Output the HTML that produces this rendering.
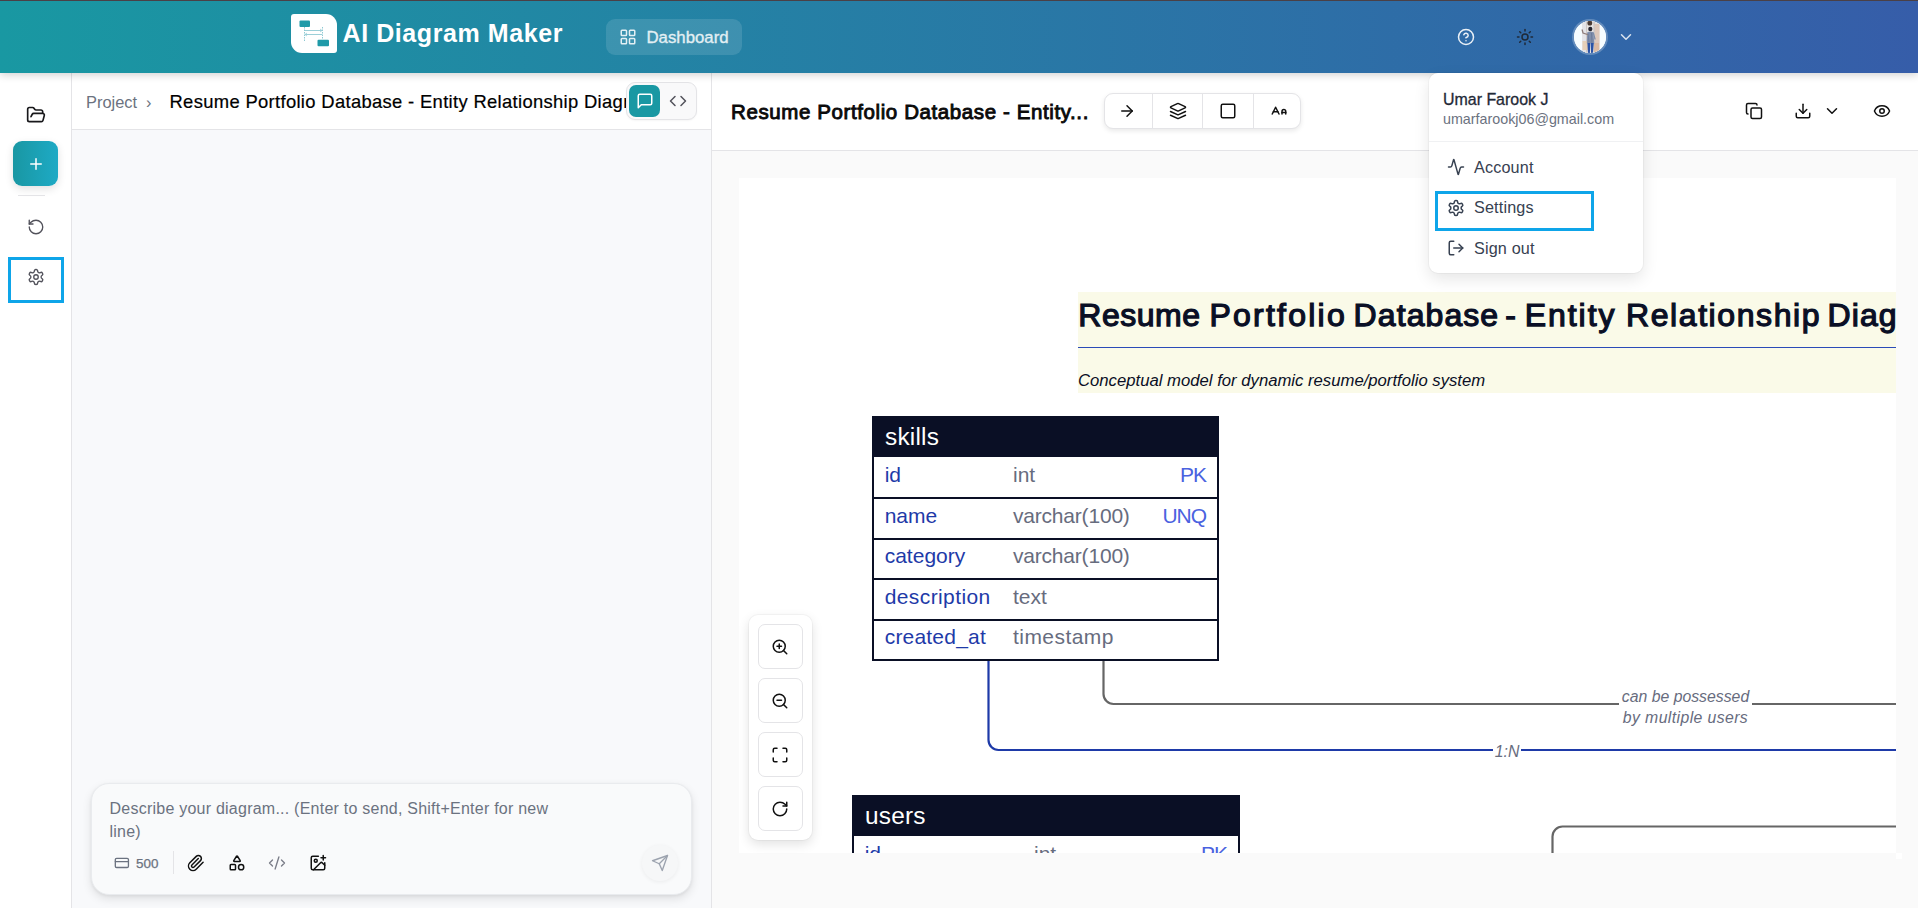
<!DOCTYPE html>
<html lang="en">
<head>
<meta charset="utf-8">
<title>AI Diagram Maker</title>
<style>
*{box-sizing:border-box;margin:0;padding:0}
html,body{width:1918px;height:908px;overflow:hidden;background:#fafafa;font-family:"Liberation Sans",sans-serif;color:#111}
.abs,.t{position:absolute}
.t{white-space:nowrap}
svg.ic{position:absolute;fill:none;stroke:currentColor;stroke-width:2;stroke-linecap:round;stroke-linejoin:round;overflow:visible}
#topline{left:0;top:0;width:1918px;height:1px;background:#4a4046;z-index:30}
#header{left:0;top:0;width:1918px;height:73px;background:linear-gradient(90deg,#1998a2,#365da9);box-shadow:0 2px 8px rgba(0,0,0,.18);z-index:20}
#logo{left:291px;top:14px;width:46px;height:39px;background:#fff;border-radius:3px 11px 3px 11px}
#brand{left:342.5px;top:17.800px;font-size:25px;font-weight:700;color:#fff;line-height:30px;letter-spacing:.58px}
#dash{left:606px;top:19px;width:136px;height:36px;border-radius:9px;background:rgba(255,255,255,.12);color:rgba(255,255,255,.86)}
#dashtx{left:646.5px;top:27.600px;font-size:16.800px;line-height:20px;color:#fff;-webkit-text-stroke:.35px #fff;opacity:.86}
#avatar{left:1572px;top:19px;width:36px;height:36px;border-radius:50%;background:#fff;border:2px solid rgba(255,255,255,.24);background-clip:padding-box;overflow:hidden}
#sidebar{left:0;top:73px;width:72px;height:835px;background:#fff;border-right:1px solid #e4e4e7;z-index:5}
#plus{left:13px;top:141px;width:45px;height:45px;border-radius:9px;background:linear-gradient(90deg,#1997a3,#1eaac5);box-shadow:0 3px 8px rgba(0,0,0,.12);z-index:6}
#sdiv{left:18px;top:195px;width:27px;height:1px;background:#e4e4e7;z-index:6}
#hl1{left:8px;top:257px;width:56px;height:46px;border:3px solid #0ea5e9;z-index:7}
#chat{left:72px;top:73px;width:640px;height:835px;background:#f8f9fb;border-right:1px solid #e4e4e7}
#chathead{left:72px;top:73px;width:639px;height:57px;background:#fff;border-bottom:1px solid #e4e4e7;overflow:hidden}
#crumb{left:14px;top:18.600px;font-size:16.4px;line-height:20px;color:#6b7280}
#ctitle{left:97.500px;top:17.600px;font-size:18.4px;line-height:22px;color:#000;letter-spacing:.33px;-webkit-text-stroke:.2px #000}
#toggle{left:626px;top:82px;width:71px;height:38px;background:#f9f9fa;border:1px solid #e4e4e7;border-radius:9px;box-shadow:0 1px 2px rgba(0,0,0,.04)}
#tact{left:629px;top:85px;width:31px;height:32px;background:#1998a3;border-radius:7px}
#inbox{left:91px;top:783px;width:601px;height:112px;background:#f9fafb;border:1px solid #e9ebee;border-radius:18px;box-shadow:0 4px 10px rgba(0,0,0,.10),0 1px 3px rgba(0,0,0,.06)}
#ph{left:109.500px;top:798px;width:470px;font-size:16px;letter-spacing:.235px;line-height:22.5px;color:#6b7280;white-space:normal}
#c500{left:136px;top:855.700px;font-size:13.4px;line-height:16px;color:#6b7280;-webkit-text-stroke:.25px #6b7280}
#idiv{left:173px;top:851px;width:1px;height:23px;background:#e4e4e7}
#sendb{left:642px;top:845px;width:36px;height:36px;border-radius:50%;background:#f6f7f8;box-shadow:0 1px 4px rgba(0,0,0,.06)}
#tbar{left:712px;top:73px;width:1206px;height:78px;background:#fff;border-bottom:1px solid #e4e4e7}
#ptitle{left:731px;top:100px;font-size:20.5px;font-weight:400;line-height:24px;color:#0a0a0a;-webkit-text-stroke:.9px #0a0a0a;letter-spacing:.6px}
#grp{left:1104px;top:93px;width:197px;height:36px;background:#fff;border:1px solid #e4e4e7;border-radius:9px;box-shadow:0 2px 5px rgba(0,0,0,.09)}
#grp i{position:absolute;top:0;width:1px;height:34px;background:#e4e4e7}
#canvas{left:739px;top:178px;width:1157px;height:675px;background:#fff;overflow:hidden}
#corner{left:1896px;top:853px;width:6px;height:6px;background:#fff}
#zoomp{left:749px;top:615px;width:63px;height:225px;background:#fff;border-radius:9px;box-shadow:0 4px 12px rgba(0,0,0,.12),0 0 0 1px rgba(0,0,0,.03)}
.zb{position:absolute;left:758px;width:45px;height:45px;border:1px solid #e4e4e7;border-radius:7px;background:#fff}
#menu{left:1429px;top:73px;width:214px;height:200px;background:#fff;border-radius:9px;box-shadow:0 6px 16px rgba(0,0,0,.10),0 0 0 1px rgba(0,0,0,.03);z-index:25}
#mname{left:1443px;top:89.700px;font-size:15.950px;-webkit-text-stroke:.3px #1f2937;line-height:20px;color:#1f2937;z-index:26}
#mmail{left:1443px;top:110px;font-size:14.3px;line-height:18px;color:#6b7280;z-index:26}
#mdiv{left:1429px;top:141px;width:214px;height:1px;background:#f0f1f3;z-index:26}
.mi{font-size:16.200px;letter-spacing:.15px;line-height:20px;color:#374151;z-index:26}
#hl2{left:1435px;top:191px;width:159px;height:40px;border:3px solid #0ea5e9;z-index:27}
/* diagram */
#ybox{left:339px;top:114px;width:900px;height:101px;background:#fafae8}
#dtitle{position:absolute;left:0;top:117px;width:1157px;height:40px;font-size:32px;font-weight:400;line-height:40px;color:#0a0f25;-webkit-text-stroke:1.250px #0a0f25;white-space:nowrap}
#dtitle span{position:absolute;top:0}
#dline{left:339px;top:169px;width:900px;height:1px;background:#2a4bb8}
#dsub{left:339px;top:193px;font-size:16.700px;font-style:italic;line-height:20px;color:#0a0f25}
.tbl{position:absolute;background:#fff;border:2px solid #0a0f25}
.th{position:absolute;left:-2px;top:-2px;height:41px;background:#0a0f25}
.thx{position:absolute;left:11px;top:2.600px;font-size:24.400px;letter-spacing:.2px;line-height:32px;color:#fff;white-space:nowrap}
.row{position:absolute;left:0;width:100%;height:2px;background:#0a0f25}
.c1,.c2,.c3{position:absolute;font-size:21px;line-height:26px;white-space:nowrap}
.c1{color:#1e3aa8}
.c2{color:#676c7e}
.c3{color:#4a62e0;text-align:right;letter-spacing:-1.100px;margin-right:1.100px}
.lbl{position:absolute;font-size:15.800px;font-style:italic;line-height:21px;color:#676c7e;background:#fff;text-align:center;white-space:nowrap}
</style>
</head>
<body>
<div id="topline" class="abs"></div>
<div id="header" class="abs">
  <div id="logo" class="abs">
    <svg width="46" height="39" viewBox="0 0 46 39" style="position:absolute;left:0;top:0">
      <rect x="8.500" y="6.500" width="10.500" height="6.500" rx="1" fill="#1f9aa8"/>
      <rect x="26.500" y="25.700" width="11.500" height="6.500" rx="1" fill="#1f9aa8"/>
      <path d="M13.500 13v14M31.500 13v12.500" stroke="#8fc9d2" stroke-width="1" stroke-dasharray="1.500 1" fill="none"/>
      <path d="M14 16.500h17M14 20.500h17" stroke="#9ccfd8" stroke-width="1" fill="none"/>
      <path d="M29 15l2 1.500-2 1.500M16 19l-2 1.500 2 1.500" stroke="#9ccfd8" stroke-width=".8" fill="none"/>
    </svg>
  </div>
  <div id="brand" class="t">AI Diagram Maker</div>
  <div id="dash" class="abs"></div>
  <svg class="ic" viewBox="0 0 24 24" width="18.0" height="18.0" style="left:619px;top:28px;color:rgba(255,255,255,.86);stroke-width:2.0"><rect width="7" height="7" x="3" y="3" rx="1"/><rect width="7" height="7" x="14" y="3" rx="1"/><rect width="7" height="7" x="14" y="14" rx="1"/><rect width="7" height="7" x="3" y="14" rx="1"/></svg>
  <div id="dashtx" class="t">Dashboard</div>
  <svg class="ic" viewBox="0 0 24 24" width="18.0" height="18.0" style="left:1457px;top:28px;color:rgba(255,255,255,.9);stroke-width:2.0"><circle cx="12" cy="12" r="10"/><path d="M9.09 9a3 3 0 0 1 5.83 1c0 2-3 3-3 3"/><path d="M12 17h.01"/></svg>
  <svg class="ic" viewBox="0 0 24 24" width="18.0" height="18.0" style="left:1516px;top:28px;color:#1f2937;stroke-width:2.0"><circle cx="12" cy="12" r="4"/><path d="M12 2v2"/><path d="M12 20v2"/><path d="m4.93 4.93 1.41 1.41"/><path d="m17.66 17.66 1.41 1.41"/><path d="M2 12h2"/><path d="M20 12h2"/><path d="m6.34 17.66-1.41 1.41"/><path d="m19.07 4.93-1.41 1.41"/></svg>
  <div id="avatar" class="abs">
    <svg width="32" height="32" viewBox="0 0 32 32" style="position:absolute;left:0;top:0">
      <rect width="32" height="32" fill="#f6fcff"/>
      <rect x="8" y="0" width="17.500" height="32" fill="#e6e3e2"/>
      <rect x="8" y="0" width="4" height="32" fill="#e4e4e8"/>
      <rect x="12" y="0" width="1" height="32" fill="#cfc9c7"/>
      <rect x="20.500" y="3" width="5" height="26" fill="#dcc3b4" opacity=".85"/>
      <rect x="19.500" y="0" width="1.200" height="32" fill="#c9c2c0"/>
      <rect x="8.500" y="20" width="5.500" height="9" fill="#e6cdb3" opacity=".9"/>
      <rect x="20" y="22" width="5" height="9" fill="#d9b59c" opacity=".8"/>
      <ellipse cx="15.800" cy="2" rx="2.400" ry="2.600" fill="#4a3a33"/>
      <ellipse cx="16.300" cy="8" rx="2.100" ry="2.300" fill="#26252f"/>
      <path d="M13.300 11.200c2-.8 4.200-.8 6 0l1 11h-7.500z" fill="#7f8eab"/>
      <path d="M14 12.500l1 9M17.500 12l.5 10" stroke="#5f6f90" stroke-width=".6" fill="none"/>
      <path d="M13.500 13.500l-4.500-1.500-.8-3" stroke="#8f7d7a" stroke-width="1.300" fill="none" stroke-linecap="round"/>
      <path d="M19.300 12l1.700 6" stroke="#7f8eab" stroke-width="1.300" fill="none" stroke-linecap="round"/>
      <path d="M13.400 22h2.900l-.4 10h-2zM16.800 22h3l-.9 10h-1.900z" fill="#2a53a6"/>
    </svg>
  </div>
  <svg class="ic" viewBox="0 0 24 24" width="18.0" height="18.0" style="left:1617px;top:28px;color:rgba(255,255,255,.82);stroke-width:2.0"><path d="m6 9 6 6 6-6"/></svg>
</div>

<div id="sidebar" class="abs"></div>
<svg class="ic" viewBox="0 0 24 24" width="20.0" height="20.0" style="left:26px;top:104.5px;color:#18181b;stroke-width:2.0;z-index:6"><path d="m6 14 1.5-2.9A2 2 0 0 1 9.24 10H20a2 2 0 0 1 1.94 2.5l-1.54 6a2 2 0 0 1-1.95 1.5H4a2 2 0 0 1-2-2V5a2 2 0 0 1 2-2h3.9a2 2 0 0 1 1.69.9l.81 1.2a2 2 0 0 0 1.67.9H18a2 2 0 0 1 2 2v2"/></svg>
<div id="plus" class="abs"></div>
<svg class="ic" viewBox="0 0 24 24" width="18.0" height="18.0" style="left:26.5px;top:154.5px;color:#ffffff;stroke-width:2.0;z-index:7"><path d="M5 12h14"/><path d="M12 5v14"/></svg>
<div id="sdiv" class="abs"></div>
<svg class="ic" viewBox="0 0 24 24" width="18.0" height="18.0" style="left:27px;top:218px;color:#52525b;stroke-width:1.8;z-index:6"><path d="M3 12a9 9 0 1 0 9-9 9.75 9.75 0 0 0-6.74 2.74L3 8"/><path d="M3 3v5h5"/></svg>
<svg class="ic" viewBox="0 0 24 24" width="18.0" height="18.0" style="left:27px;top:268px;color:#52525b;stroke-width:1.8;z-index:6"><path d="M12.22 2h-.44a2 2 0 0 0-2 2v.18a2 2 0 0 1-1 1.73l-.43.25a2 2 0 0 1-2 0l-.15-.08a2 2 0 0 0-2.73.73l-.22.38a2 2 0 0 0 .73 2.73l.15.1a2 2 0 0 1 1 1.72v.51a2 2 0 0 1-1 1.74l-.15.09a2 2 0 0 0-.73 2.73l.22.38a2 2 0 0 0 2.73.73l.15-.08a2 2 0 0 1 2 0l.43.25a2 2 0 0 1 1 1.73V20a2 2 0 0 0 2 2h.44a2 2 0 0 0 2-2v-.18a2 2 0 0 1 1-1.73l.43-.25a2 2 0 0 1 2 0l.15.08a2 2 0 0 0 2.73-.73l.22-.39a2 2 0 0 0-.73-2.73l-.15-.08a2 2 0 0 1-1-1.74v-.5a2 2 0 0 1 1-1.74l.15-.09a2 2 0 0 0 .73-2.73l-.22-.38a2 2 0 0 0-2.73-.73l-.15.08a2 2 0 0 1-2 0l-.43-.25a2 2 0 0 1-1-1.73V4a2 2 0 0 0-2-2z"/><circle cx="12" cy="12" r="3"/></svg>
<div id="hl1" class="abs"></div>

<div id="chat" class="abs"></div>
<div id="chathead" class="abs">
  <div id="crumb" class="t">Project&nbsp; ›</div>
  <div id="ctitle" class="t">Resume Portfolio Database - Entity Relationship Diagram</div>
</div>
<div id="toggle" class="abs"></div>
<div id="tact" class="abs"></div>
<svg class="ic" viewBox="0 0 24 24" width="18.0" height="18.0" style="left:635.5px;top:92px;color:#ffffff;stroke-width:2.0"><path d="M21 15a2 2 0 0 1-2 2H7l-4 4V5a2 2 0 0 1 2-2h14a2 2 0 0 1 2 2z"/></svg>
<svg class="ic" viewBox="0 0 24 24" width="18.0" height="18.0" style="left:669px;top:92px;color:#52525b;stroke-width:2.0"><polyline points="16 18 22 12 16 6"/><polyline points="8 6 2 12 8 18"/></svg>

<div id="inbox" class="abs"></div>
<div id="ph" class="t">Describe your diagram... (Enter to send, Shift+Enter for new line)</div>
<svg class="ic" viewBox="0 0 24 24" width="15.75" height="15.75" style="left:114.125px;top:855.125px;color:#6b7280;stroke-width:2.0"><rect width="20" height="14" x="2" y="5" rx="2"/><line x1="2" x2="22" y1="10" y2="10"/></svg>
<div id="c500" class="t">500</div>
<div id="idiv" class="abs"></div>
<svg class="ic" viewBox="0 0 24 24" width="18.0" height="18.0" style="left:187px;top:854px;color:#111111;stroke-width:2.0"><path d="m21.440 11.050-9.190 9.190a6 6 0 0 1-8.490-8.490l8.570-8.570A4 4 0 1 1 18 8.840l-8.590 8.570a2 2 0 0 1-2.830-2.830l8.490-8.480"/></svg>
<svg class="ic" viewBox="0 0 24 24" width="18.0" height="18.0" style="left:228px;top:854px;color:#111111;stroke-width:2.0"><path d="M8.300 10a.7.7 0 0 1-.626-1.079L11.400 3a.7.7 0 0 1 1.198-.043L16.300 8.900a.7.7 0 0 1-.572 1.100Z"/><rect x="3" y="14" width="7" height="7" rx="1"/><circle cx="17.500" cy="17.500" r="3.500"/></svg>
<svg class="ic" viewBox="0 0 24 24" width="18.0" height="18.0" style="left:268px;top:854px;color:#7a7d88;stroke-width:1.8"><path d="m18 16 4-4-4-4"/><path d="m6 8-4 4 4 4"/><path d="m14.500 4-5 16"/></svg>
<svg class="ic" viewBox="0 0 24 24" width="18.0" height="18.0" style="left:308.8px;top:854px;color:#111111;stroke-width:2.0"><path d="M16 5h6"/><path d="M19 2v6"/><path d="M21 11.500V19a2 2 0 0 1-2 2H5a2 2 0 0 1-2-2V5a2 2 0 0 1 2-2h7.500"/><path d="m21 15-3.086-3.086a2 2 0 0 0-2.828 0L6 21"/><circle cx="9" cy="9" r="2"/></svg>
<div id="sendb" class="abs"></div>
<svg class="ic" viewBox="0 0 24 24" width="18.0" height="18.0" style="left:651px;top:854px;color:#9ca3af;stroke-width:1.8"><path d="m22 2-7 20-4-9-9-4Z"/><path d="M22 2 11 13"/></svg>

<div id="tbar" class="abs"></div>
<div id="ptitle" class="t">Resume Portfolio Database - Entity...</div>
<div id="grp" class="abs"><i style="left:47px"></i><i style="left:97px"></i><i style="left:148px"></i></div>
<svg class="ic" viewBox="0 0 24 24" width="18.0" height="18.0" style="left:1118px;top:102px;color:#111111;stroke-width:2.0"><path d="M5 12h14"/><path d="m12 5 7 7-7 7"/></svg>
<svg class="ic" viewBox="0 0 24 24" width="18.0" height="18.0" style="left:1169px;top:102px;color:#111111;stroke-width:2.0"><path d="m12.83 2.18a2 2 0 0 0-1.66 0L2.6 6.08a1 1 0 0 0 0 1.83l8.58 3.91a2 2 0 0 0 1.66 0l8.58-3.9a1 1 0 0 0 0-1.83Z"/><path d="m22 17.65-9.17 4.16a2 2 0 0 1-1.66 0L2 17.65"/><path d="m22 12.65-9.17 4.16a2 2 0 0 1-1.66 0L2 12.65"/></svg>
<svg class="ic" viewBox="0 0 24 24" width="18.0" height="18.0" style="left:1219px;top:102px;color:#111111;stroke-width:2.0"><rect width="18" height="18" x="3" y="3" rx="2"/></svg>
<svg class="ic" viewBox="0 0 24 24" width="18.0" height="18.0" style="left:1270px;top:102px;color:#111111;stroke-width:2.0"><path d="M21 14h-5"/><path d="M16 16v-3.500a2.500 2.500 0 0 1 5 0V16"/><path d="M4.500 13h6"/><path d="m3 16 4.500-9 4.500 9"/></svg>
<svg class="ic" viewBox="0 0 24 24" width="18.0" height="18.0" style="left:1745px;top:102px;color:#111111;stroke-width:2.0"><rect width="14" height="14" x="8" y="8" rx="2" ry="2"/><path d="M4 16c-1.100 0-2-.9-2-2V4c0-1.100.9-2 2-2h10c1.100 0 2 .9 2 2"/></svg>
<svg class="ic" viewBox="0 0 24 24" width="18.0" height="18.0" style="left:1794px;top:102px;color:#111111;stroke-width:2.0"><path d="M21 15v4a2 2 0 0 1-2 2H5a2 2 0 0 1-2-2v-4"/><polyline points="7 10 12 15 17 10"/><line x1="12" x2="12" y1="15" y2="3"/></svg>
<svg class="ic" viewBox="0 0 24 24" width="18.0" height="18.0" style="left:1823px;top:102px;color:#111111;stroke-width:2.0"><path d="m6 9 6 6 6-6"/></svg>
<svg class="ic" viewBox="0 0 24 24" width="18.0" height="18.0" style="left:1873px;top:102px;color:#111111;stroke-width:2.0"><path d="M2.062 12.348a1 1 0 0 1 0-.696 10.750 10.750 0 0 1 19.876 0 1 1 0 0 1 0 .696 10.750 10.750 0 0 1-19.876 0"/><circle cx="12" cy="12" r="3"/></svg>

<div id="canvas" class="abs">
  <div id="ybox" class="abs"></div>
  <div id="dtitle"><span style="left:339.3px;letter-spacing:0.53px">Resume</span> <span style="left:470.5px;letter-spacing:2.23px">Portfolio</span> <span style="left:614.6px;letter-spacing:1.08px">Database</span> <span style="left:766.3px;letter-spacing:0px">-</span> <span style="left:785.8px;letter-spacing:1.93px">Entity</span> <span style="left:887px;letter-spacing:1.58px">Relationship</span> <span style="left:1088.4px;letter-spacing:1.150px">Diagram</span></div>
  <div id="dline" class="abs"></div>
  <div id="dsub" class="t">Conceptual model for dynamic resume/portfolio system</div>
  <svg width="1157" height="675" viewBox="0 0 1157 675" style="position:absolute;left:0;top:0" fill="none">
    <path d="M249.500 482V562a10 10 0 0 0 10 10H1160" stroke="#1e3aa8" stroke-width="2.200"/>
    <path d="M364.500 482V516a10 10 0 0 0 10 10H1160" stroke="#666" stroke-width="2.200"/>
    <path d="M813.500 680V658.500a10 10 0 0 1 10-10H1160" stroke="#666" stroke-width="2.200"/>
  </svg>
  <div class="lbl" style="left:880px;top:507.700px;width:133px;height:42px">can be possessed<br><span style="letter-spacing:.4px">by multiple users</span></div>
  <div class="lbl" style="left:754px;top:562.500px;width:28px;height:21px">1:N</div>
  <div class="tbl" style="left:133px;top:238px;width:347px;height:245px">
    <div class="th" style="width:347px"></div><div class="thx">skills</div>
    <div class="row" style="top:79px"></div><div class="row" style="top:120px"></div><div class="row" style="top:160px"></div><div class="row" style="top:201px"></div>
    <div class="c1" style="left:10.700px;top:44px">id</div><div class="c2" style="left:139px;top:44px">int</div><div class="c3" style="right:10px;top:44px">PK</div>
    <div class="c1" style="left:10.700px;top:84.500px">name</div><div class="c2" style="left:139px;top:84.500px;letter-spacing:-.2px">varchar(100)</div><div class="c3" style="right:10px;top:84.500px">UNQ</div>
    <div class="c1" style="left:10.700px;top:125px">category</div><div class="c2" style="left:139px;top:125px;letter-spacing:-.2px">varchar(100)</div>
    <div class="c1" style="left:10.700px;top:165.500px;letter-spacing:.4px">description</div><div class="c2" style="left:139px;top:165.500px">text</div>
    <div class="c1" style="left:10.700px;top:206px;letter-spacing:.2px">created_at</div><div class="c2" style="left:139px;top:206px;letter-spacing:.45px">timestamp</div>
  </div>
  <div class="tbl" style="left:113px;top:617px;width:388px;height:100px">
    <div class="th" style="width:388px"></div><div class="thx">users</div>
    <div class="c1" style="left:10.700px;top:44px">id</div><div class="c2" style="left:180px;top:44px">int</div><div class="c3" style="right:10px;top:44px">PK</div>
  </div>
</div>
<div id="corner" class="abs"></div>
<div id="zoomp" class="abs"></div>
<div class="zb" style="top:624px"></div><div class="zb" style="top:678px"></div><div class="zb" style="top:732px"></div><div class="zb" style="top:786px"></div>
<svg class="ic" viewBox="0 0 24 24" width="18.0" height="18.0" style="left:771px;top:638px;color:#111111;stroke-width:2.0"><circle cx="11" cy="11" r="8"/><line x1="21" x2="16.650" y1="21" y2="16.650"/><line x1="11" x2="11" y1="8" y2="14"/><line x1="8" x2="14" y1="11" y2="11"/></svg>
<svg class="ic" viewBox="0 0 24 24" width="18.0" height="18.0" style="left:771px;top:692px;color:#111111;stroke-width:2.0"><circle cx="11" cy="11" r="8"/><line x1="21" x2="16.650" y1="21" y2="16.650"/><line x1="8" x2="14" y1="11" y2="11"/></svg>
<svg class="ic" viewBox="0 0 24 24" width="18.0" height="18.0" style="left:771px;top:746px;color:#111111;stroke-width:2.0"><path d="M8 3H5a2 2 0 0 0-2 2v3"/><path d="M21 8V5a2 2 0 0 0-2-2h-3"/><path d="M3 16v3a2 2 0 0 0 2 2h3"/><path d="M16 21h3a2 2 0 0 0 2-2v-3"/></svg>
<svg class="ic" viewBox="0 0 24 24" width="18.0" height="18.0" style="left:771px;top:800px;color:#111111;stroke-width:2.0"><path d="M21 12a9 9 0 1 1-9-9c2.520 0 4.930 1 6.740 2.740L21 8"/><path d="M21 3v5h-5"/></svg>

<div id="menu" class="abs"></div>
<div id="mname" class="t">Umar Farook J</div>
<div id="mmail" class="t">umarfarookj06@gmail.com</div>
<div id="mdiv" class="abs"></div>
<svg class="ic" viewBox="0 0 24 24" width="18.0" height="18.0" style="left:1447px;top:158px;color:#374151;stroke-width:2.0;z-index:26"><path d="M22 12h-2.480a2 2 0 0 0-1.930 1.460l-2.350 8.360a.25.25 0 0 1-.48 0L9.240 2.180a.25.25 0 0 0-.48 0l-2.350 8.360A2 2 0 0 1 4.490 12H2"/></svg>
<div class="t mi" style="left:1474px;top:157.100px">Account</div>
<svg class="ic" viewBox="0 0 24 24" width="18.0" height="18.0" style="left:1447px;top:199px;color:#374151;stroke-width:2.0;z-index:26"><path d="M12.22 2h-.44a2 2 0 0 0-2 2v.18a2 2 0 0 1-1 1.73l-.43.25a2 2 0 0 1-2 0l-.15-.08a2 2 0 0 0-2.73.73l-.22.38a2 2 0 0 0 .73 2.73l.15.1a2 2 0 0 1 1 1.72v.51a2 2 0 0 1-1 1.74l-.15.09a2 2 0 0 0-.73 2.73l.22.38a2 2 0 0 0 2.73.73l.15-.08a2 2 0 0 1 2 0l.43.25a2 2 0 0 1 1 1.73V20a2 2 0 0 0 2 2h.44a2 2 0 0 0 2-2v-.18a2 2 0 0 1 1-1.73l.43-.25a2 2 0 0 1 2 0l.15.08a2 2 0 0 0 2.73-.73l.22-.39a2 2 0 0 0-.73-2.73l-.15-.08a2 2 0 0 1-1-1.74v-.5a2 2 0 0 1 1-1.74l.15-.09a2 2 0 0 0 .73-2.73l-.22-.38a2 2 0 0 0-2.73-.73l-.15.08a2 2 0 0 1-2 0l-.43-.25a2 2 0 0 1-1-1.73V4a2 2 0 0 0-2-2z"/><circle cx="12" cy="12" r="3"/></svg>
<div class="t mi" style="left:1474px;top:197.300px">Settings</div>
<svg class="ic" viewBox="0 0 24 24" width="18.0" height="18.0" style="left:1447px;top:239px;color:#374151;stroke-width:2.0;z-index:26"><path d="M9 21H5a2 2 0 0 1-2-2V5a2 2 0 0 1 2-2h4"/><polyline points="16 17 21 12 16 7"/><line x1="21" x2="9" y1="12" y2="12"/></svg>
<div class="t mi" style="left:1474px;top:238.100px">Sign out</div>
<div id="hl2" class="abs"></div>
</body>
</html>
